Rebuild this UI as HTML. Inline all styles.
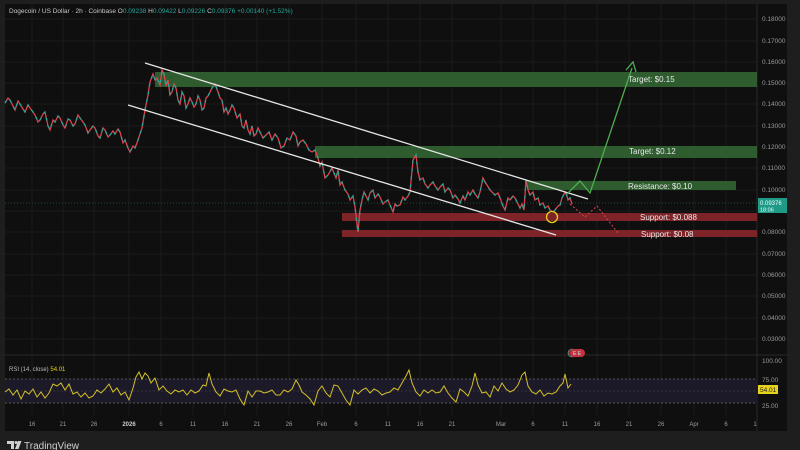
<!DOCTYPE html>
<html><head><meta charset="utf-8"><style>
html,body{margin:0;padding:0;background:#1e1e1e;width:800px;height:450px;overflow:hidden;font-family:"Liberation Sans",sans-serif}
svg{position:absolute;left:0;top:0}
</style></head><body>
<svg width="800" height="450" viewBox="0 0 800 450" font-family="Liberation Sans, sans-serif">
<rect x="0" y="0" width="800" height="450" fill="#1e1e1e"/>
<rect x="5" y="4" width="782" height="427" fill="#0f0f0f"/>
<g stroke="#1b1b1b" stroke-width="1">
<line x1="5" y1="19" x2="757" y2="19"/><line x1="5" y1="41" x2="757" y2="41"/><line x1="5" y1="62" x2="757" y2="62"/><line x1="5" y1="83" x2="757" y2="83"/><line x1="5" y1="104" x2="757" y2="104"/><line x1="5" y1="126" x2="757" y2="126"/><line x1="5" y1="147" x2="757" y2="147"/><line x1="5" y1="168" x2="757" y2="168"/><line x1="5" y1="190" x2="757" y2="190"/><line x1="5" y1="211" x2="757" y2="211"/><line x1="5" y1="232" x2="757" y2="232"/><line x1="5" y1="254" x2="757" y2="254"/><line x1="5" y1="275" x2="757" y2="275"/><line x1="5" y1="296" x2="757" y2="296"/><line x1="5" y1="318" x2="757" y2="318"/><line x1="5" y1="339" x2="757" y2="339"/>
<line x1="32" y1="4" x2="32" y2="415"/><line x1="63" y1="4" x2="63" y2="415"/><line x1="94" y1="4" x2="94" y2="415"/><line x1="129" y1="4" x2="129" y2="415"/><line x1="161" y1="4" x2="161" y2="415"/><line x1="193" y1="4" x2="193" y2="415"/><line x1="225" y1="4" x2="225" y2="415"/><line x1="257" y1="4" x2="257" y2="415"/><line x1="289" y1="4" x2="289" y2="415"/><line x1="322" y1="4" x2="322" y2="415"/><line x1="356" y1="4" x2="356" y2="415"/><line x1="388" y1="4" x2="388" y2="415"/><line x1="420" y1="4" x2="420" y2="415"/><line x1="452" y1="4" x2="452" y2="415"/><line x1="501" y1="4" x2="501" y2="415"/><line x1="533" y1="4" x2="533" y2="415"/><line x1="565" y1="4" x2="565" y2="415"/><line x1="597" y1="4" x2="597" y2="415"/><line x1="629" y1="4" x2="629" y2="415"/><line x1="661" y1="4" x2="661" y2="415"/><line x1="694" y1="4" x2="694" y2="415"/><line x1="726" y1="4" x2="726" y2="415"/>
</g>
<line x1="757" y1="4" x2="757" y2="431" stroke="#2a2a2a"/>
<line x1="5" y1="355" x2="787" y2="355" stroke="#2a2a2a"/>
<text x="9" y="13" font-size="6.5" fill="#c8c8c8">Dogecoin / US Dollar · 2h · Coinbase <tspan fill="#ccc">O</tspan><tspan fill="#26a69a">0.09238</tspan> <tspan fill="#ccc">H</tspan><tspan fill="#26a69a">0.09422</tspan> <tspan fill="#ccc">L</tspan><tspan fill="#26a69a">0.09226</tspan> <tspan fill="#ccc">C</tspan><tspan fill="#26a69a">0.09376 +0.00140 (+1.52%)</tspan></text>
<g font-size="6.5" fill="#9a9a9a">
<text x="762" y="21">0.18000</text><text x="762" y="43">0.17000</text><text x="762" y="64">0.16000</text><text x="762" y="85">0.15000</text><text x="762" y="106">0.14000</text><text x="762" y="128">0.13000</text><text x="762" y="149">0.12000</text><text x="762" y="170">0.11000</text><text x="762" y="192">0.10000</text><text x="762" y="234">0.08000</text><text x="762" y="256">0.07000</text><text x="762" y="277">0.06000</text><text x="762" y="298">0.05000</text><text x="762" y="320">0.04000</text><text x="762" y="341">0.03000</text>
<text x="762" y="363">100.00</text><text x="762" y="382">75.00</text><text x="762" y="408">25.00</text>
</g>
<rect x="155" y="72" width="602" height="15" fill="#2e5c2e"/>
<rect x="315" y="146" width="442" height="12" fill="#2e5c2e"/>
<rect x="527" y="181" width="209" height="9" fill="#2e5c2e"/>
<rect x="342" y="213" width="415" height="8" fill="#7e2428"/>
<rect x="342" y="230" width="415" height="7" fill="#7e2428"/>
<g font-size="8" fill="#e8e8e8">
<text x="628" y="82">Target: $0.15</text>
<text x="629" y="154">Target: $0.12</text>
<text x="628" y="189">Resistance: $0.10</text>
<text x="640" y="220">Support: $0.088</text>
<text x="641" y="237">Support: $0.08</text>
</g>
<line x1="5" y1="203" x2="757" y2="203" stroke="#1f4a3a" stroke-dasharray="1 2"/>
<polyline fill="none" stroke="#e0424c" stroke-width="1.3" points="5,103 8,98 10,100 13,106 15,110 18,101 20,104 23,109 25,112 28,105 30,108 33,112 35,115 38,122 40,120 43,114 45,112 48,126 50,130 53,120 55,122 58,116 60,118 63,125 65,128 68,119 70,120 73,126 75,124 78,115 80,118 83,122 85,125 88,133 90,130 93,126 95,128 98,136 100,138 103,128 105,130 108,137 110,135 113,131 115,134 118,129 120,132 123,143 125,140 128,148 130,152 133,146 135,148 138,140 142,128 145,110 148,95 150,82 153,74 155,80 157,78 160,85 162,70 164,74 166,86 168,80 170,95 172,92 174,84 176,88 178,100 180,104 182,92 184,96 186,108 188,104 190,98 192,102 194,107 196,104 198,96 200,100 202,110 204,108 206,98 208,96 210,92 212,88 215,84 218,92 220,98 222,100 224,112 226,108 228,114 230,110 232,105 234,108 237,118 240,114 242,126 244,128 246,120 248,130 250,134 252,126 254,136 256,134 258,128 260,132 263,138 266,135 269,132 272,140 275,134 278,138 281,148 284,146 287,138 290,140 293,132 296,136 298,146 300,142 303,140 306,144 309,150 312,152 315,150 318,158 320,166 322,162 325,178 328,175 332,168 336,178 338,170 340,185 342,182 345,190 348,194 350,200 353,196 355,207 358,232 360,210 362,200 364,192 366,196 368,200 370,193 373,190 375,198 378,194 380,197 383,204 385,202 388,200 390,205 393,212 395,204 397,206 400,205 403,197 405,200 408,196 410,192 413,160 416,155 418,172 420,180 423,178 425,184 428,188 430,185 433,182 435,186 438,190 440,187 443,184 445,192 448,188 450,190 453,198 455,195 458,199 460,203 463,196 465,200 468,192 470,195 473,190 475,194 478,198 480,192 483,178 485,182 487,185 490,190 492,192 495,195 498,193 500,198 503,206 505,210 508,198 510,200 513,196 515,198 518,204 520,208 522,204 524,210 526,180 528,190 530,195 533,192 535,200 538,198 540,205 543,203 545,208 548,206 550,210 553,212 555,210 558,206 560,205 562,198 565,192 567,196 568,200 570,198 572,204"/>
<polyline fill="none" stroke="#26a69a" stroke-width="1.3" stroke-dasharray="3 5" points="5,103 8,98 10,100 13,106 15,110 18,101 20,104 23,109 25,112 28,105 30,108 33,112 35,115 38,122 40,120 43,114 45,112 48,126 50,130 53,120 55,122 58,116 60,118 63,125 65,128 68,119 70,120 73,126 75,124 78,115 80,118 83,122 85,125 88,133 90,130 93,126 95,128 98,136 100,138 103,128 105,130 108,137 110,135 113,131 115,134 118,129 120,132 123,143 125,140 128,148 130,152 133,146 135,148 138,140 142,128 145,110 148,95 150,82 153,74 155,80 157,78 160,85 162,70 164,74 166,86 168,80 170,95 172,92 174,84 176,88 178,100 180,104 182,92 184,96 186,108 188,104 190,98 192,102 194,107 196,104 198,96 200,100 202,110 204,108 206,98 208,96 210,92 212,88 215,84 218,92 220,98 222,100 224,112 226,108 228,114 230,110 232,105 234,108 237,118 240,114 242,126 244,128 246,120 248,130 250,134 252,126 254,136 256,134 258,128 260,132 263,138 266,135 269,132 272,140 275,134 278,138 281,148 284,146 287,138 290,140 293,132 296,136 298,146 300,142 303,140 306,144 309,150 312,152 315,150 318,158 320,166 322,162 325,178 328,175 332,168 336,178 338,170 340,185 342,182 345,190 348,194 350,200 353,196 355,207 358,232 360,210 362,200 364,192 366,196 368,200 370,193 373,190 375,198 378,194 380,197 383,204 385,202 388,200 390,205 393,212 395,204 397,206 400,205 403,197 405,200 408,196 410,192 413,160 416,155 418,172 420,180 423,178 425,184 428,188 430,185 433,182 435,186 438,190 440,187 443,184 445,192 448,188 450,190 453,198 455,195 458,199 460,203 463,196 465,200 468,192 470,195 473,190 475,194 478,198 480,192 483,178 485,182 487,185 490,190 492,192 495,195 498,193 500,198 503,206 505,210 508,198 510,200 513,196 515,198 518,204 520,208 522,204 524,210 526,180 528,190 530,195 533,192 535,200 538,198 540,205 543,203 545,208 548,206 550,210 553,212 555,210 558,206 560,205 562,198 565,192 567,196 568,200 570,198 572,204"/>
<line x1="145" y1="63" x2="588" y2="199" stroke="#e6e6e6" stroke-width="1.3"/>
<line x1="128" y1="105" x2="556" y2="235" stroke="#e6e6e6" stroke-width="1.3"/>
<polyline fill="none" stroke="#4caf50" stroke-width="1.3" points="567,194 580,181 590,193 632,68"/>
<polyline fill="none" stroke="#4caf50" stroke-width="1.3" points="626,70 633,62 636,72"/>
<polyline fill="none" stroke="#e0424c" stroke-width="1" stroke-dasharray="2 2" points="570,204 585,217 597,206 618,233"/>
<circle cx="552" cy="217" r="5.5" fill="none" stroke="#e6d21e" stroke-width="1.3"/>
<rect x="758" y="198" width="29" height="15" fill="#1e9a86"/>
<text x="760" y="205" font-size="6" fill="#eaffff">0.09376</text>
<text x="760" y="211.5" font-size="5.5" fill="#eaffff">18:06</text>
<circle cx="572" cy="353" r="4" fill="#444" stroke="#999" stroke-width=".6"/>
<rect x="570" y="349" width="15" height="8" rx="4" fill="#c8323c"/>
<text x="573" y="355" font-size="5" fill="#aef">E E</text>
<text x="9" y="371" font-size="6" fill="#bbb">RSI (14, close) <tspan fill="#e6d21e">54.01</tspan></text>
<rect x="5" y="379" width="752" height="24" fill="#1c1a28"/>
<line x1="5" y1="379" x2="757" y2="379" stroke="#555" stroke-dasharray="2 2"/>
<line x1="5" y1="403" x2="757" y2="403" stroke="#555" stroke-dasharray="2 2"/>
<line x1="5" y1="391" x2="757" y2="391" stroke="#333" stroke-dasharray="2 2"/>
<polyline fill="none" stroke="#d4c028" stroke-width="1" points="5,392 9,389 13,395 17,390 21,399 25,391 29,394 33,389 37,397 41,392 45,398 49,393 53,384 57,386 61,383 65,390 69,384 73,394 77,392 81,397 85,393 89,398 93,396 97,390 101,393 105,389 109,384 113,392 117,388 121,395 125,392 129,400 133,388 136,377 139,372 142,379 145,373 148,376 151,383 155,378 159,390 163,386 167,391 171,394 175,390 179,392 183,390 187,395 191,390 195,393 199,391 203,385 206,386 209,373 212,384 216,392 220,396 224,389 228,391 232,392 236,390 240,399 244,405 248,391 252,397 256,391 260,391 264,393 268,392 272,390 276,395 280,395 284,390 288,392 292,389 296,380 299,385 302,392 306,395 310,399 314,405 318,391 322,386 326,393 330,397 334,385 338,386 342,393 346,400 350,405 354,390 358,394 362,390 366,388 370,393 374,389 378,391 382,395 386,393 390,392 394,388 398,390 402,383 406,376 409,370 412,383 416,392 420,396 424,390 428,393 432,390 436,393 440,392 444,386 448,393 452,398 456,402 460,389 464,392 468,396 472,386 475,373 478,385 482,393 486,392 490,397 494,386 498,391 502,383 506,389 510,392 514,390 518,385 522,375 525,372 528,386 532,392 536,394 540,390 544,396 548,393 552,394 556,392 560,386 563,383 565,374 568,388 571,384"/>
<rect x="758" y="385" width="20" height="9" fill="#e6d21e"/>
<text x="760" y="392" font-size="6.5" fill="#222">54.01</text>
<g font-size="6" fill="#9a9a9a" text-anchor="middle">
<text x="32" y="426">16</text><text x="63" y="426">21</text><text x="94" y="426">26</text><text x="129" y="426" font-weight="bold" fill="#ccc">2026</text><text x="161" y="426">6</text><text x="193" y="426">11</text><text x="225" y="426">16</text><text x="257" y="426">21</text><text x="289" y="426">26</text><text x="322" y="426">Feb</text><text x="356" y="426">6</text><text x="388" y="426">11</text><text x="420" y="426">16</text><text x="452" y="426">21</text><text x="501" y="426">Mar</text><text x="533" y="426">6</text><text x="565" y="426">11</text><text x="597" y="426">16</text><text x="629" y="426">21</text><text x="661" y="426">26</text><text x="694" y="426">Apr</text><text x="726" y="426">6</text><text x="755" y="426">1</text>
</g>
<g fill="#d0d0d0">
<path d="M7 441 H14 V449 H11 V444 H7 Z"/>
<circle cx="16" cy="442.5" r="1.5"/>
<path d="M18 441 H21.5 L18.5 449 H15 Z"/>
</g>
<text x="24" y="449" font-size="10" fill="#d0d0d0">TradingView</text>
</svg>
</body></html>
